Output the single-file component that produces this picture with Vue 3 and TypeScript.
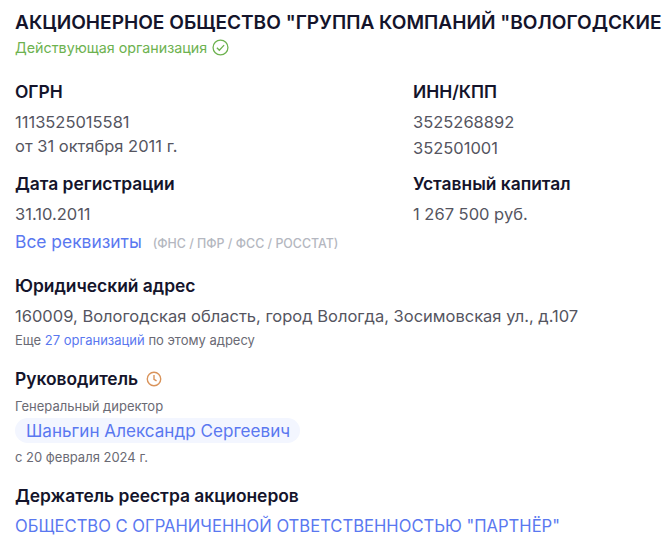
<template>
  <div class="card">
    <h1 class="title">АКЦИОНЕРНОЕ ОБЩЕСТВО "ГРУППА КОМПАНИЙ "ВОЛОГОДСКИЕ</h1>
    <div class="status">
      Действующая организация
      <svg width="17" height="17" viewBox="0 0 16 16" fill="none" stroke="currentColor" stroke-width="1.2">
        <circle cx="8" cy="8" r="7"></circle>
        <path d="M4.6 8.2l2.3 2.4 4.5-4.8"></path>
      </svg>
    </div>

    <div class="req-grid">
      <div class="req">
        <div class="label">ОГРН</div>
        <div class="value">{{ ogrn }}</div>
        <div class="value tight">от 31 октября 2011 г.</div>
      </div>
      <div class="req">
        <div class="label">ИНН/КПП</div>
        <div class="value">{{ inn }}</div>
        <div class="value second">{{ kpp }}</div>
      </div>
      <div class="req">
        <div class="label">Дата регистрации</div>
        <div class="value">31.10.2011</div>
      </div>
      <div class="req">
        <div class="label">Уставный капитал</div>
        <div class="value">1 267 500 руб.</div>
      </div>
    </div>

    <div class="all-req">
      <a class="link">Все реквизиты</a>
      <span class="sources">(ФНС / ПФР / ФСС / РОССТАТ)</span>
    </div>

    <section class="block address">
      <div class="label">Юридический адрес</div>
      <div class="value">160009, Вологодская область, город Вологда, Зосимовская ул., д.107</div>
      <div class="small">Еще <a class="link">27 организаций</a> по этому адресу</div>
    </section>

    <section class="block head">
      <div class="label with-icon">
        Руководитель
        <svg width="16" height="16" viewBox="0 0 15 15" fill="none" stroke="#d9935a" stroke-width="1.3">
          <circle cx="7.5" cy="7.5" r="6.3"></circle>
          <path d="M7.5 3.8v4l2.4 1.5"></path>
        </svg>
      </div>
      <div class="small post">Генеральный директор</div>
      <a class="person">Шаньгин Александр Сергеевич</a>
      <div class="small since">с 20 февраля 2024 г.</div>
    </section>

    <section class="block holder">
      <div class="label">Держатель реестра акционеров</div>
      <a class="link value">ОБЩЕСТВО С ОГРАНИЧЕННОЙ ОТВЕТСТВЕННОСТЬЮ "ПАРТНЁР"</a>
    </section>
  </div>
</template>

<script setup lang="ts">
const ogrn = '1113525015581'
const inn = '3525268892'
const kpp = '352501001'
</script>

<style>
html, body {
  background: #fff;
  overflow: hidden;
}
</style>

<style scoped>
.card {
  padding: 11px 0 0 15px;
  font-family: Inter, "Noto Sans", sans-serif;
  color: #55555f;
  white-space: nowrap;
  overflow: hidden;
  height: 553px;
  box-sizing: border-box;
}

.title {
  margin: 0;
  font-size: 19.1px;
  line-height: 22px;
  font-weight: 600;
  color: #14142b;
}

.status {
  display: flex;
  align-items: center;
  gap: 5px;
  margin-top: 3px;
  height: 22px;
  font-size: 14.3px;
  color: #6db24f;
}

.req-grid {
  display: grid;
  grid-template-columns: 398px 1fr;
  row-gap: 13px;
  margin-top: 23px;
}

.label {
  font-size: 17.4px;
  line-height: 22px;
  font-weight: 600;
  color: #14142b;
}

.value {
  font-size: 16.5px;
  line-height: 24px;
  margin-top: 7px;
  display: block;
}

.value.tight {
  margin-top: 0;
}

.value.second {
  margin-top: 2px;
}

.all-req {
  display: flex;
  align-items: baseline;
  gap: 11px;
  margin-top: 5px;
  height: 24px;
}

.all-req .link {
  font-size: 17.4px;
}

.link {
  color: #5a78f0;
}

.sources {
  font-size: 12.4px;
  font-weight: 500;
  color: #b4b7c0;
}

.block {
  margin-top: 20px;
}

.small {
  font-size: 13px;
  line-height: 16px;
  color: #6a6a74;
}

.address .small {
  margin-top: 4px;
}

.head {
  margin-top: 20px;
}

.with-icon {
  display: flex;
  align-items: center;
  gap: 8px;
}

.post {
  margin-top: 8px;
}

.person {
  display: inline-block;
  margin-top: 4px;
  padding: 0 10px 0 11px;
  font-size: 17.1px;
  line-height: 25px;
  color: #5a78f0;
  background: #f3f6ff;
  border-radius: 13px;
}

.since {
  margin-top: 6px;
}

.holder {
  margin-top: 20px;
}

.holder .value {
  font-size: 16.6px;
}
</style>
